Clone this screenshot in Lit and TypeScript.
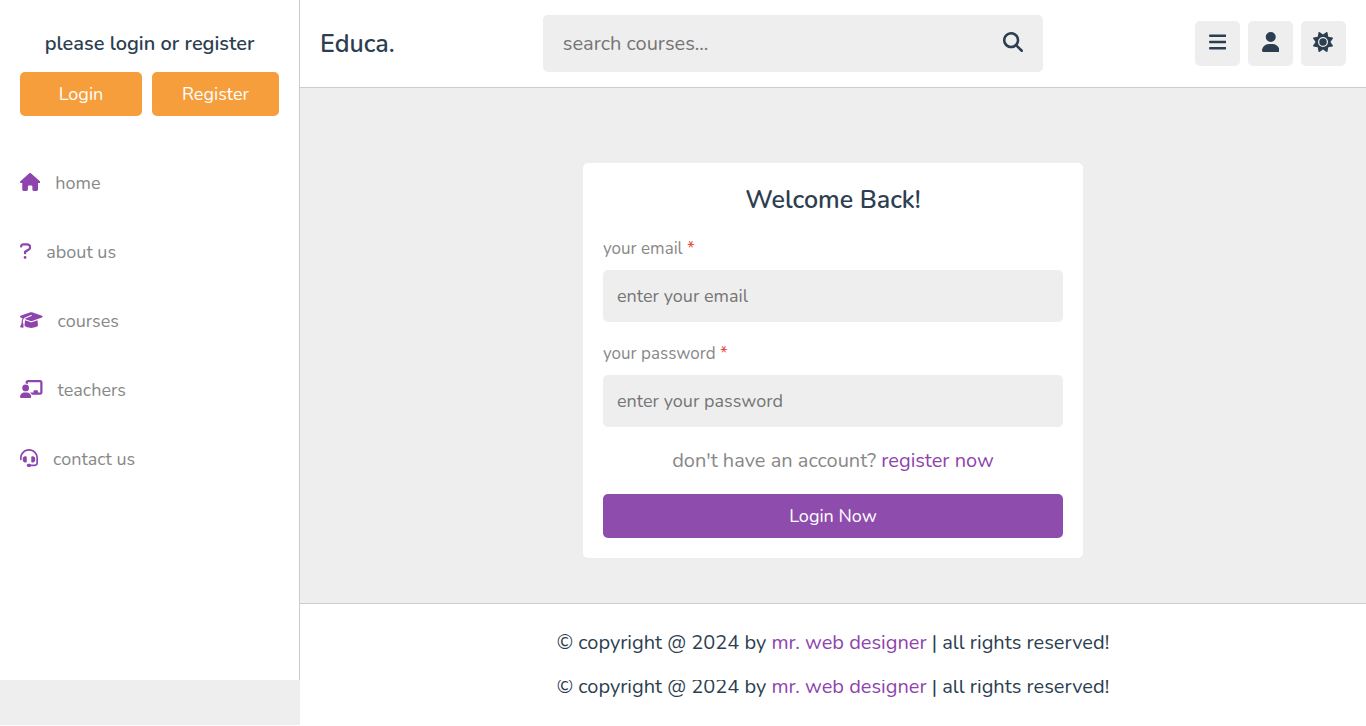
import { LitElement, html, css, svg } from "lit";
import { customElement } from "lit/decorators.js";

interface Icon {
  width: number;
  path: string;
}

const icons: Record<string, Icon> = {
  house: {
    width: 576,
    path: "M575.8 255.5c0 18-15 32.1-32 32.1h-32l.7 160.2c0 2.7-.2 5.4-.5 8.1V472c0 22.1-17.9 40-40 40H456c-1.100 0-2.200 0-3.300-.1c-1.400 .1-2.800 .1-4.200 .1H416 392c-22.100 0-40-17.900-40-40V448 384c0-17.700-14.300-32-32-32H256c-17.700 0-32 14.300-32 32v64 24c0 22.100-17.900 40-40 40H160 128.100c-1.500 0-3-.1-4.500-.2c-1.200 .1-2.400 .2-3.600 .2H104c-22.100 0-40-17.900-40-40V360c0-.9 0-1.900 .1-2.800V287.600H32c-18 0-32-14-32-32.100c0-9 3-17 10-24L266.400 8c7-7 15-8 22-8s15 2 21 7L564.800 231.500c8 7 12 15 11 24z",
  },
  question: {
    width: 320,
    path: "M204.300 32.010H96c-52.940 0-96 43.060-96 96c0 17.670 14.310 31.100 32 31.100s32-14.320 32-31.100c0-17.640 14.340-32 32-32h108.300C232.800 96.010 256 119.200 256 147.800c0 19.720-10.970 37.470-30.500 47.330L127.800 252.400C117.100 258.200 112 268.700 112 280v40c0 17.670 14.310 31.990 32 31.990s32-14.320 32-31.990V298.300L256 251.300c39.470-19.750 64-59.420 64-103.500C320 83.950 268.100 32.010 204.300 32.010zM144 400c-22.090 0-40 17.910-40 40s17.910 39.100 40 39.100s40-17.900 40-39.100S166.100 400 144 400z",
  },
  cap: {
    width: 640,
    path: "M320 32c-8.100 0-16.100 1.400-23.700 4.100L15.800 137.400C6.300 140.900 0 149.900 0 160s6.300 19.100 15.800 22.600l57.900 20.900C57.300 229.300 48 259.800 48 291.900v28.100c0 28.400-10.800 57.700-22.300 80.800c-6.500 13-13.900 25.800-22.500 37.600C0 442.700-.9 448.300 .9 453.400s6 8.900 11.200 10.200l64 16c4.200 1.100 8.700 .3 12.400-2s6.300-6.100 7.100-10.400c8.600-42.800 4.300-81.200-2.100-108.700C90.300 344.300 86 329.800 80 316.500V291.900c0-30.200 10.200-58.700 27.900-81.500c12.900-15.500 29.600-28 49.200-35.700l157-61.700c8.200-3.200 17.500 .8 20.700 9s-.8 17.500-9 20.700l-157 61.700c-12.400 4.900-23.300 12.400-32.200 21.600l159.600 57.600c7.600 2.700 15.600 4.100 23.700 4.100s16.100-1.400 23.700-4.100L624.200 182.600c9.500-3.400 15.800-12.500 15.800-22.600s-6.300-19.100-15.800-22.600L343.700 36.100C336.100 33.400 328.100 32 320 32zM128 408c0 35.300 86 72 192 72s192-36.700 192-72L496.700 262.600 354.500 314c-11.100 4-22.800 6-34.500 6s-23.500-2-34.500-6L143.300 262.600 128 408z",
  },
  teacher: {
    width: 640,
    path: "M160 64c0-35.300 28.700-64 64-64H576c35.300 0 64 28.700 64 64V352c0 35.300-28.700 64-64 64H336.800c-11.800-25.500-29.900-47.500-52.400-64H384V320c0-17.700 14.300-32 32-32h64c17.700 0 32 14.300 32 32v32h64V64L224 64v49.100C205.200 102.200 183.300 96 160 96V64zm0 64a96 96 0 1 1 0 192 96 96 0 1 1 0-192zM133.300 352h53.300C260.300 352 320 411.700 320 485.300c0 14.700-11.900 26.700-26.700 26.700H26.700C11.900 512 0 500.100 0 485.300C0 411.700 59.700 352 133.300 352z",
  },
  headset: {
    width: 512,
    path: "M256 48C141.100 48 48 141.100 48 256v40c0 13.300-10.700 24-24 24s-24-10.700-24-24V256C0 114.600 114.600 0 256 0S512 114.600 512 256V400.100c0 48.600-39.400 88-88.100 88L313.600 488c-8.300 14.300-23.800 24-41.600 24H240c-26.500 0-48-21.500-48-48s21.500-48 48-48h32c17.800 0 33.300 9.700 41.600 24l110.400 .1c22.100 0 40-17.900 40-40V256c0-114.900-93.100-208-208-208zM144 208h16c17.700 0 32 14.300 32 32V352c0 17.700-14.300 32-32 32H144c-35.300 0-64-28.700-64-64V272c0-35.300 28.700-64 64-64zm224 0c35.300 0 64 28.700 64 64v48c0 35.300-28.700 64-64 64H352c-17.700 0-32-14.300-32-32V240c0-17.700 14.300-32 32-32h16z",
  },
  search: {
    width: 512,
    path: "M416 208c0 45.900-14.900 88.300-40 122.700L502.600 457.400c12.500 12.500 12.500 32.800 0 45.300s-32.800 12.500-45.300 0L330.700 376c-34.400 25.200-76.800 40-122.700 40C93.100 416 0 322.900 0 208S93.100 0 208 0S416 93.100 416 208zM208 352a144 144 0 1 0 0-288 144 144 0 1 0 0 288z",
  },
  bars: {
    width: 448,
    path: "M0 96C0 78.300 14.300 64 32 64H416c17.700 0 32 14.300 32 32s-14.300 32-32 32H32C14.300 128 0 113.700 0 96zM0 256c0-17.700 14.300-32 32-32H416c17.700 0 32 14.300 32 32s-14.300 32-32 32H32c-17.700 0-32-14.300-32-32zM448 416c0 17.700-14.300 32-32 32H32c-17.700 0-32-14.300-32-32s14.300-32 32-32H416c17.700 0 32 14.300 32 32z",
  },
  user: {
    width: 448,
    path: "M224 256A128 128 0 1 0 224 0a128 128 0 1 0 0 256zm-45.700 48C79.800 304 0 383.800 0 482.300C0 498.700 13.300 512 29.700 512H418.300c16.400 0 29.700-13.300 29.700-29.700C448 383.800 368.200 304 269.700 304H178.300z",
  },
  sun: {
    width: 512,
    path: "M361.500 1.200c5 2.100 8.600 6.600 9.600 11.900L391 121l107.900 19.800c5.300 1 9.800 4.600 11.900 9.600s1.500 10.700-1.600 15.200L446.900 256l62.300 90.300c3.100 4.500 3.700 10.200 1.600 15.200s-6.600 8.600-11.900 9.600L391 391 371.100 498.900c-1 5.300-4.600 9.800-9.600 11.900s-10.700 1.500-15.200-1.600L256 446.900l-90.300 62.300c-4.500 3.100-10.200 3.700-15.200 1.600s-8.600-6.600-9.600-11.900L121 391 13.100 371.100c-5.300-1-9.800-4.600-11.900-9.600s-1.500-10.700 1.600-15.200L65.100 256 2.800 165.700c-3.100-4.500-3.700-10.200-1.600-15.200s6.600-8.600 11.900-9.600L121 121 140.900 13.100c1-5.300 4.600-9.800 9.600-11.900s10.700-1.500 15.200 1.600L256 65.100 346.300 2.800c4.500-3.100 10.200-3.700 15.200-1.600zM160 256a96 96 0 1 1 192 0 96 96 0 1 1 -192 0zm224 0a128 128 0 1 0 -256 0 128 128 0 1 0 256 0z",
  },
};

const icon = (name: string) => {
  const { width, path } = icons[name];
  return html`<svg class="icon" viewBox="0 0 ${width} 512" aria-hidden="true">${svg`<path d=${path}></path>`}</svg>`;
};

const links = [
  { icon: "house", label: "home" },
  { icon: "question", label: "about us" },
  { icon: "cap", label: "courses" },
  { icon: "teacher", label: "teachers" },
  { icon: "headset", label: "contact us" },
];

@customElement("app-root")
export class AppRoot extends LitElement {
  static styles = css`
    :host {
      display: grid;
      grid-template-columns: 300px 1fr;
      background: #fff;
      color: #2c3e50;
      font-family: Nunito, "Open Sans", sans-serif;
      font-size: 20px;
      line-height: 27px;
    }
    * {
      box-sizing: border-box;
      margin: 0;
      padding: 0;
    }
    a {
      color: #8e44ad;
      text-decoration: none;
    }
    button,
    input {
      border: none;
      border-radius: 5px;
      font-family: inherit;
      font-weight: inherit;
    }
    .icon {
      height: 18px;
      flex: none;
      margin-bottom: 3px;
      fill: currentColor;
    }
    .sidebar {
      background: #fff;
      border-right: 1px solid #ccc;
      padding-top: 30px;
    }
    .account {
      padding: 0 20px;
    }
    .prompt {
      font-size: 20px;
      font-weight: 600;
      text-align: center;
    }
    .choices {
      display: grid;
      grid-template-columns: 24fr 25fr;
      gap: 10px;
      margin-top: 15px;
    }
    .btn {
      display: block;
      width: 100%;
      height: 44px;
      border-radius: 5px;
      color: #fff;
      font-size: 18px;
      line-height: 44px;
      text-align: center;
      cursor: pointer;
    }
    .orange {
      background: #f59e3b;
    }
    .purple {
      background: #8e4dad;
    }
    .nav {
      margin-top: 33px;
    }
    .nav-link {
      display: flex;
      align-items: center;
      gap: 15px;
      padding: 22px 20px;
      color: #888;
      font-size: 18px;
      line-height: 25px;
    }
    .nav-link .icon {
      color: #8e44ad;
    }
    .header {
      display: flex;
      align-items: center;
      justify-content: space-between;
      padding: 15px 20px;
      border-bottom: 1px solid #ccc;
    }
    .logo {
      color: #2c3e50;
      font-size: 25px;
      font-weight: 600;
      line-height: 34px;
    }
    .search {
      display: flex;
      align-items: center;
      width: 500px;
      padding: 15px 20px;
      border-radius: 5px;
      background: #eee;
    }
    .search-input {
      flex: 1;
      min-width: 0;
      height: 27px;
      background: none;
      font-size: 20px;
    }
    .search-btn {
      display: flex;
      background: none;
      color: #2c3e50;
    }
    .search-btn .icon,
    .tool .icon {
      height: 20px;
    }
    .tools {
      display: flex;
      gap: 8px;
      padding-left: 4px;
    }
    .tool {
      display: grid;
      place-items: center;
      width: 45px;
      height: 45px;
      background: #eee;
      color: #2c3e50;
    }
    .main {
      display: flex;
      justify-content: center;
      padding: 75px 20px 45px;
      background: #eee;
    }
    .card {
      width: 500px;
      padding: 20px;
      border-radius: 5px;
      background: #fff;
    }
    .title {
      font-size: 25px;
      font-weight: 600;
      line-height: 34px;
      text-align: center;
    }
    .label {
      display: block;
      margin: 20px 0 10px;
      color: #888;
      font-size: 17px;
      line-height: 23px;
    }
    .required {
      color: #e74c3c;
    }
    .box {
      display: block;
      width: 100%;
      height: 52px;
      padding: 0 14px;
      background: #eee;
      font-size: 18px;
    }
    .hint {
      margin: 20px 0;
      color: #888;
      text-align: center;
    }
    .footer {
      padding: 25px 20px 24px;
      border-top: 1px solid #ccc;
      text-align: center;
    }
    .under {
      background: #eee;
    }
    .repeat {
      display: flex;
      align-items: flex-end;
      justify-content: center;
      height: 45px;
      padding: 0 20px 25px;
      overflow: hidden;
    }
  `;

  private copyright() {
    return html`<p>
      &copy; copyright @ 2024 by <a href="#">mr. web designer</a> | all rights reserved!
    </p>`;
  }

  render() {
    return html`
      <aside class="sidebar">
        <div class="account">
          <h3 class="prompt">please login or register</h3>
          <div class="choices">
            <a class="btn orange" href="#login">Login</a>
            <a class="btn orange" href="#register">Register</a>
          </div>
        </div>
        <nav class="nav">
          ${links.map(
            (link) => html`<a class="nav-link" href="#">${icon(link.icon)}<span>${link.label}</span></a>`
          )}
        </nav>
      </aside>
      <div class="page">
        <header class="header">
          <a class="logo" href="#">Educa.</a>
          <form class="search" role="search">
            <input class="search-input" type="text" placeholder="search courses..." aria-label="search courses" />
            <button class="search-btn" type="button" aria-label="search">${icon("search")}</button>
          </form>
          <div class="tools">
            <button class="tool" aria-label="menu">${icon("bars")}</button>
            <button class="tool" aria-label="profile">${icon("user")}</button>
            <button class="tool" aria-label="theme">${icon("sun")}</button>
          </div>
        </header>
        <main class="main">
          <form class="card">
            <h3 class="title">Welcome Back!</h3>
            <label class="label" for="email">your email <span class="required">*</span></label>
            <input class="box" id="email" type="email" placeholder="enter your email" />
            <label class="label" for="password">your password <span class="required">*</span></label>
            <input class="box" id="password" type="password" placeholder="enter your password" />
            <p class="hint">don't have an account? <a href="#register">register now</a></p>
            <button class="btn purple" type="button">Login Now</button>
          </form>
        </main>
        <footer class="footer">${this.copyright()}</footer>
      </div>
      <div class="under"></div>
      <div class="repeat">${this.copyright()}</div>
    `;
  }
}
